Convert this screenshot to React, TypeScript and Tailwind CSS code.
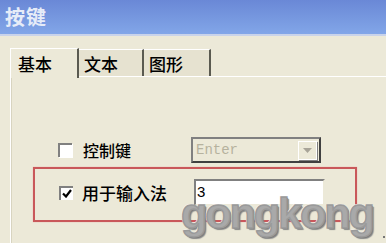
import React from "react";

const cjk = { fontFamily: '"Noto Sans CJK SC", "Noto Sans", sans-serif' };

function Tab({ label, active, width }: { label: string; active?: boolean; width: string }) {
  return (
    <div
      className={`${width} flex items-center border-r-2 border-r-[#5a5a50] ${
        active
          ? "h-[30px] -mb-[2px] z-10 bg-[#ece9d8] border-t border-l border-white pl-[7px]"
          : "h-[27px] mt-[3px] bg-[#e6e2d0] border-t border-white pl-[5px]"
      }`}
    >
      <span className="text-[17px] font-medium leading-none text-black" style={cjk}>
        {label}
      </span>
    </div>
  );
}

export default function App() {
  return (
    <div className="relative w-[386px] h-[243px] overflow-hidden bg-[#ece9d8]" style={cjk}>
      {/* title bar */}
      <div className="h-[36px] border-b-2 border-[#c9d3ea] bg-gradient-to-b from-[#6a88d6] to-[#82a6e8] flex items-center pl-[5px]">
        <span className="text-[20px] font-bold text-[#e6ecf8] leading-none tracking-[1px]">按键</span>
      </div>

      <div className="pt-[10px] pl-[10px]">
        {/* tabs */}
        <div className="flex items-end h-[30px]">
          <Tab label="基本" active width="w-[69px]" />
          <Tab label="文本" width="w-[65px]" />
          <Tab label="图形" width="w-[67px]" />
        </div>

        {/* panel */}
        <div className="h-[170px] border-t border-l border-white shadow-[inset_1px_0_0_#d8d4c0]">
          <div className="flex items-center h-[26px] mt-[60px]">
            <div className="ml-[47px] w-[14px] h-[14px] bg-white border-l-2 border-t-2 border-[#808080] shadow-[1px_1px_0_#ffffff]" />
            <span className="ml-[11px] text-[16px] font-medium leading-none text-black">控制键</span>
            <div className="ml-[60px] w-[130px] h-[26px] border-2 border-t-[#808080] border-l-[#808080] border-b-[#404040] border-r-[#404040] bg-[#ece9d8] flex items-center">
              <span className="pl-[3px] text-[14px] text-[#b6b29e]" style={{ fontFamily: '"Liberation Mono", monospace' }}>
                Enter
              </span>
              <div className="ml-auto mr-[2px] w-[19px] h-[19px] bg-[#ece9d8] border border-white shadow-[1px_1px_0_#808080] flex items-center justify-center">
                <svg width="9" height="5" viewBox="0 0 9 5">
                  <path d="M0 0h9L4.5 5z" fill="#a8a498" />
                </svg>
              </div>
            </div>
          </div>

          {/* highlighted row */}
          <div className="ml-[22px] mt-[4px] w-[324px] h-[55px] border-2 border-[#c9585a] shadow-[0_0_1px_#e9a0a0] flex pt-[10px]">
            <div className="flex items-center h-[27px]">
              <div className="ml-[24px] w-[14px] h-[14px] bg-white border-l-2 border-t-2 border-[#808080] flex items-center justify-center">
                <svg width="10" height="9" viewBox="0 0 10 9">
                  <path d="M1 4.5l3 3L9 1" stroke="#000" strokeWidth="2.2" fill="none" />
                </svg>
              </div>
              <span className="ml-[9px] text-[17px] font-medium leading-none text-black">用于输入法</span>
              <div className="ml-[27px] w-[131px] h-[27px] border-2 border-t-[#808080] border-l-[#808080] border-b-[#ece9d8] border-r-[#ece9d8] bg-white flex items-center">
                <span className="pl-[1px] text-[15px] text-black" style={{ fontFamily: '"Liberation Sans", sans-serif' }}>
                  3
                </span>
              </div>
            </div>
          </div>
        </div>
      </div>

      {/* watermark */}
      <div
        className="absolute left-[181px] top-[192px] text-[43px] font-bold leading-none text-[#a9a9a9] tracking-[-2px]"
        style={{
          fontFamily: '"Liberation Sans", Arial, sans-serif',
          WebkitTextStroke: "1.5px #9a9a9a",
          textShadow: "-1px -1px 0 #f4f4f4, 1px 1px 0 #777777, 2px 2px 1px #888888",
        }}
      >
        gongkong
      </div>
      <div className="absolute left-[383px] top-[236px] w-[2px] h-[2px] bg-[#777]" />
    </div>
  );
}
